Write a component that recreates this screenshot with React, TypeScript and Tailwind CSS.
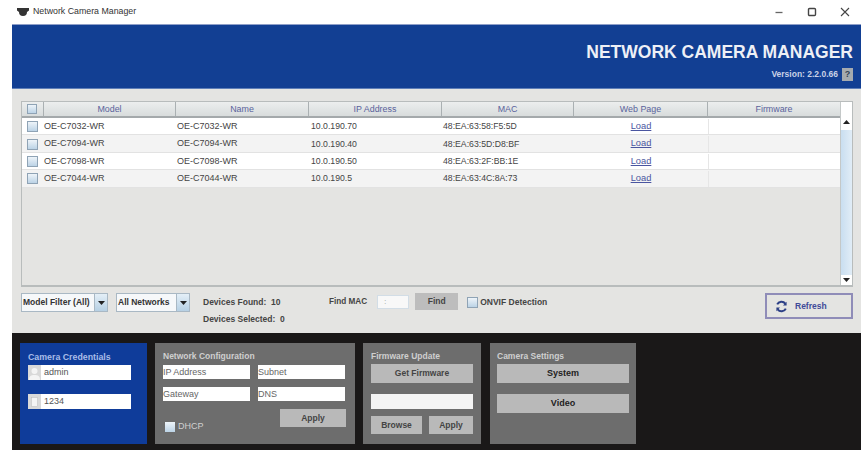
import React from "react";

const rows = [
  ["OE-C7032-WR", "10.0.190.70", "48:EA:63:58:F5:5D"],
  ["OE-C7094-WR", "10.0.190.40", "48:EA:63:5D:D8:BF"],
  ["OE-C7098-WR", "10.0.190.50", "48:EA:63:2F:BB:1E"],
  ["OE-C7044-WR", "10.0.190.5", "48:EA:63:4C:8A:73"],
];

function Check({ className = "" }: { className?: string }) {
  return <span className={"block w-[10px] h-[10px] shrink-0 border border-[#8fa3b5] bg-gradient-to-b from-[#eef4f9] to-[#bcd3e6] " + className} />;
}

function Combo({ label, w }: { label: string; w: string }) {
  return (
    <div className={"flex h-[19px] border border-[#a9b8c4] bg-[#f6f8fa] " + w}>
      <span className="flex-1 pl-px text-[8.5px] font-bold leading-[16px] text-[#333] whitespace-nowrap">{label}</span>
      <span className="flex w-[13px] items-center justify-center border-l border-[#a9b8c4] bg-gradient-to-b from-[#e4eff7] to-[#b6d0e4]">
        <svg width="7" height="4" viewBox="0 0 7 4"><path d="M0 0h7L3.500 4z" fill="#222" /></svg>
      </span>
    </div>
  );
}

function Input({ children, w, h = "h-[14px]" }: { children?: React.ReactNode; w: string; h?: string }) {
  return <div className={"bg-white text-[9px] leading-[14px] text-[#666] whitespace-nowrap " + w + " " + h}>{children}</div>;
}

function GBtn({ children, w, h, cls = "text-[#444] text-[8.5px]" }: { children: React.ReactNode; w: string; h: string; cls?: string }) {
  return <div className={"flex items-center justify-center bg-[#b9b9b9] font-bold " + w + " " + h + " " + cls}>{children}</div>;
}

export default function App() {
  return (
    <div className="w-[868px] h-[458px] overflow-hidden bg-white pl-[12px] pr-[7px] font-['Liberation_Sans',sans-serif]">
      <div className="flex h-[24px] items-center -ml-[12px] -mr-[7px] pl-[17px] pr-[18px]">
        <svg width="12" height="8" viewBox="0 0 12 8" className="mb-px"><path d="M0 0h12v2.500l-2 1.500a4 4 0 0 1-8 0L0 2.500z" fill="#333" /></svg>
        <span className="ml-[4px] text-[8.800px] text-[#333]">Network Camera Manager</span>
        <div className="ml-auto flex items-center gap-[23px] text-[#444]">
          <svg width="10" height="10" viewBox="0 0 10 10"><path d="M1.500 5.500h7" stroke="#666" strokeWidth="1.300" /></svg>
          <svg width="10" height="10" viewBox="0 0 10 10"><rect x="1.500" y="1.500" width="7" height="7" rx="1" fill="none" stroke="#444" strokeWidth="1.400" /></svg>
          <svg width="10" height="10" viewBox="0 0 10 10"><path d="M1 1l8 8M9 1L1 9" stroke="#444" strokeWidth="1.100" /></svg>
        </div>
      </div>

      <div className="flex h-[65px] flex-col items-end border-t border-[#8f9fc8] border-b border-b-[#5f7fb8] bg-[#123f93] pr-[8px] pt-[17px]">
        <div className="text-[17.500px] font-bold leading-[20px] text-[#eef0f6] whitespace-nowrap">NETWORK CAMERA MANAGER</div>
        <div className="mt-[6px] flex items-center gap-[4px]">
          <span className="text-[8.500px] font-bold text-[#c9d2e6]">Version: 2.2.0.66</span>
          <span className="flex h-[13px] w-[11px] items-center justify-center bg-[#a5aaaf] text-[9px] font-bold text-[#345]">?</span>
        </div>
      </div>

      <div className="h-[244px] bg-[#e4e4e2] pl-[9px] pr-[8px] pt-[12px]">
        <div className="flex h-[186px] border border-[#b8bcbc] border-b-2">
          <div className="flex flex-1 flex-col">
            <div className="flex h-[16px] border-b-2 border-[#a4a9ab] bg-gradient-to-b from-[#eceeee] to-[#d8dcdc] text-center text-[8.900px] leading-[14px] text-[#5a639c]">
              <div className="flex w-[22px] items-center justify-center border-r border-[#aab0b2] pr-px"><Check /></div>
              <div className="w-[132px] border-r border-[#aab0b2]">Model</div>
              <div className="w-[133px] border-r border-[#aab0b2]">Name</div>
              <div className="w-[133px] border-r border-[#aab0b2]">IP Address</div>
              <div className="w-[132px] border-r border-[#aab0b2]">MAC</div>
              <div className="w-[134px] border-r border-[#aab0b2]">Web Page</div>
              <div className="flex-1">Firmware</div>
            </div>
            {rows.map((r, i) => (
              <div key={r[0]} className={"flex h-[17.400px] items-center border-b border-[#e2e2e2] pt-px text-[8.700px] text-[#444] " + (i % 2 ? "bg-[#f3f3f3]" : "bg-white")}>
                <div className="flex w-[22px] justify-center pr-px"><Check className="w-[11px] h-[11px]" /></div>
                <div className="w-[132px] text-[9px]">{r[0]}</div>
                <div className="w-[133px] pl-px text-[9px]">{r[0]}</div>
                <div className="w-[133px] pl-[2px]">{r[1]}</div>
                <div className="w-[132px] pl-px">{r[2]}</div>
                <div className="w-[134px] text-center text-[9.300px] text-[#4a55a0] underline">Load</div>
                <div className="flex-1 self-stretch border-l border-[#e6e6e6]" />
              </div>
            ))}
          </div>
          <div className="flex w-[12px] flex-col border-l border-[#c4c8c8] bg-[#e8eaea]">
            <div className="flex h-[28px] items-start justify-center bg-white pt-[18px]">
              <svg width="7" height="4" viewBox="0 0 7 4"><path d="M0 4h7L3.500 0z" fill="#222" /></svg>
            </div>
            <div className="flex-1 bg-gradient-to-r from-[#c9def0] to-[#e1edf7]" />
            <div className="flex h-[10px] items-center justify-center bg-white">
              <svg width="7" height="4" viewBox="0 0 7 4"><path d="M0 0h7L3.500 4z" fill="#222" /></svg>
            </div>
          </div>
        </div>

        <div className="mt-[5px] flex items-start">
          <Combo label="Model Filter (All)" w="w-[87px] mt-px" />
          <Combo label="All Networks" w="w-[74px] ml-[8px] mt-px" />
          <div className="ml-[13px] w-[100px] text-[8.500px] font-bold leading-[17px] text-[#444] pt-[2px]">
            <div>Devices Found:&nbsp; 10</div>
            <div>Devices Selected:&nbsp; 0</div>
          </div>
          <span className="ml-[26px] pt-[2px] text-[8.200px] font-bold leading-[16px] text-[#444]">Find MAC</span>
          <div className="ml-[10px] h-[14px] w-[32px] mt-[3px] border border-[#d2dde6] bg-[#f8f8f8] pl-[6px] text-[7px] leading-[11px] text-[#888]">:</div>
          <div className="ml-[6px] mt-px flex h-[17px] w-[43px] items-center justify-center bg-[#bdbdbd] text-[8.500px] font-bold text-[#444]">Find</div>
          <Check className="ml-[9px] mt-[5px] w-[11px] h-[11px]" />
          <span className="ml-[2px] pt-[2px] text-[8.500px] font-bold leading-[16px] text-[#444]">ONVIF Detection</span>
          <div className="ml-auto mt-px flex h-[26px] w-[88px] items-center border-2 border-[#8f8cb8] pl-[8px] text-[8.500px] font-bold text-[#3f4a99]">
            <svg width="13" height="13" viewBox="0 0 13 13">
              <path d="M10.300 3.600A4.700 4.700 0 0 0 2.200 4.400M2.700 9.400A4.700 4.700 0 0 0 10.800 8.600" fill="none" stroke="#2c3f86" strokeWidth="2" />
              <path d="M11.600 1.800v3.700H8zM1.400 11.200V7.500H5z" fill="#2c3f86" />
            </svg>
            <span className="ml-[7px]">Refresh</span>
          </div>
        </div>
      </div>

      <div className="flex h-[117px] bg-[#1a1818] px-[8px] pt-[10px]">
        <div className="h-[101px] w-[127px] bg-[#0f3c9a] px-[8px] pt-[9px]">
          <div className="text-[8.800px] font-bold leading-[10px] text-[#a9bde8] whitespace-nowrap">Camera Credentials</div>
          <div className="mt-[3px] flex h-[15px] w-[103px] bg-white text-[9px] leading-[15px] text-[#555]">
            <span className="mr-[3px] flex w-[13px] items-end justify-center bg-[#d9d9d9]">
              <svg width="11" height="13" viewBox="0 0 11 13"><circle cx="5.500" cy="4" r="3" fill="#f4f4f4" /><path d="M0 13c0-4 2-5 5.500-5s5.500 1 5.500 5z" fill="#f4f4f4" /></svg>
            </span>
            admin
          </div>
          <div className="mt-[14px] flex h-[15px] w-[103px] bg-white text-[9px] leading-[15px] text-[#555]">
            <span className="mr-[3px] flex w-[13px] items-center justify-center bg-[#d9d9d9]">
              <svg width="7" height="10" viewBox="0 0 7 10"><rect x="0.500" y="0.500" width="6" height="9" fill="#f4f4f4" stroke="#bbb" strokeWidth="0.500" /></svg>
            </span>
            1234
          </div>
        </div>

        <div className="ml-[8px] h-[101px] w-[200px] bg-[#6d6d6d] pl-[8px] pr-[9px] pt-[8px]">
          <div className="text-[8.500px] font-bold leading-[10px] text-[#cfcfcf]">Network Configuration</div>
          <div className="mt-[4px] flex gap-[8px]">
            <Input w="w-[87px]">IP Address</Input>
            <Input w="w-[87px]">Subnet</Input>
          </div>
          <div className="mt-[8px] flex gap-[8px]">
            <Input w="w-[87px]">Gateway</Input>
            <Input w="w-[87px]">DNS</Input>
          </div>
          <div className="mt-[8px] flex items-start justify-between">
            <div className="mt-[11px] ml-[2px] flex items-center gap-[3px] text-[9px] text-[#d0d0d0]"><Check className="border-0" />DHCP</div>
            <GBtn w="w-[66px]" h="h-[18px]">Apply</GBtn>
          </div>
        </div>

        <div className="ml-[8px] h-[101px] w-[118px] bg-[#6d6d6d] px-[8px] pt-[8px]">
          <div className="text-[8.500px] font-bold leading-[10px] text-[#cfcfcf] whitespace-nowrap">Firmware Update</div>
          <GBtn w="w-full mt-[3px]" h="h-[19px]">Get Firmware</GBtn>
          <div className="mt-[11px] h-[15px] w-full bg-[#f4f4f4]" />
          <div className="mt-[7px] flex justify-between">
            <GBtn w="w-[51px]" h="h-[18px]">Browse</GBtn>
            <GBtn w="w-[44px]" h="h-[18px]">Apply</GBtn>
          </div>
        </div>

        <div className="ml-[9px] h-[101px] w-[146px] bg-[#6d6d6d] px-[7px] pt-[8px]">
          <div className="text-[8.500px] font-bold leading-[10px] text-[#cfcfcf]">Camera Settings</div>
          <GBtn w="w-full mt-[3px]" h="h-[19px]" cls="text-[#222] text-[9px]">System</GBtn>
          <GBtn w="w-full mt-[11px]" h="h-[19px]" cls="text-[#222] text-[9px]">Video</GBtn>
        </div>
      </div>
    </div>
  );
}
